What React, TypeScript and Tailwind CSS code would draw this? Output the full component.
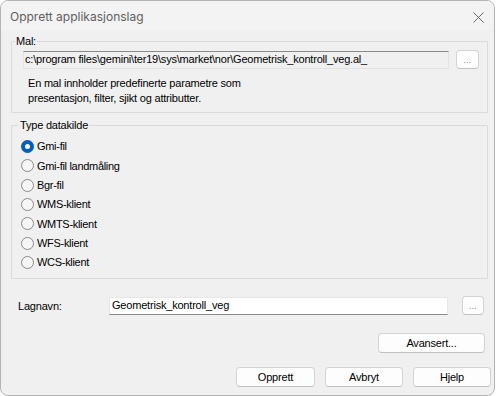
import React from "react";

const radios = [
  "Gmi-fil",
  "Gmi-fil landmåling",
  "Bgr-fil",
  "WMS-klient",
  "WMTS-klient",
  "WFS-klient",
  "WCS-klient",
];

function Btn({ className, children }: { className: string; children: React.ReactNode }) {
  return (
    <div
      className={
        "flex items-center justify-center rounded-[4px] border border-[#d3d3d3] border-b-[#c0c0c0] bg-[#fdfdfd] text-black " +
        className
      }
    >
      {children}
    </div>
  );
}

function Dots() {
  return <span className="text-[8px] leading-none text-[#555] tracking-[0.5px] mt-[3px]">...</span>;
}

export default function App() {
  return (
    <div className="w-[496px] h-[396px] bg-white">
      <div
        className="w-[495px] h-[396px] rounded-[8px] border border-[#b4b4b4] bg-[#f0f0f0] overflow-hidden flex flex-col text-[11px] tracking-[-0.2px] text-black"
        style={{ fontFamily: '"Liberation Sans", Arial, sans-serif' }}
      >
        {/* Title bar */}
        <div className="h-[29px] shrink-0 flex items-center justify-between pl-[9px] pr-[10px] bg-[#f3f3f3]">
          <span
            className="text-[12px] text-[#5f5f5f] mt-[3px] tracking-normal"
            style={{ fontFamily: 'Inter, "Noto Sans", sans-serif' }}
          >
            Opprett applikasjonslag
          </span>
          <svg width="11" height="11" viewBox="0 0 11 11" className="mt-[4px]">
            <path d="M0.5 0.5 L10.5 10.5 M10.5 0.5 L0.5 10.5" stroke="#6a6a6a" strokeWidth="1" fill="none" />
          </svg>
        </div>

        {/* Mal group */}
        <fieldset className="ml-[10px] mt-[5px] w-[477px] border border-[#dadada] rounded-[1px]">
          <legend className="ml-[3px] px-[1px] leading-[13px]">Mal:</legend>
          <div className="pl-[11px] pt-[2px] pb-[6px]">
            <div className="flex items-center gap-[7px]">
              <div className="w-[426px] h-[18px] border border-[#e3e3e3] border-t-[#8a8a8a] bg-[#f0f0f0] flex items-center pl-[1px] leading-none">
                c:\program files\gemini\ter19\sys\market\nor\Geometrisk_kontroll_veg.al_
              </div>
              <Btn className="w-[23px] h-[19px]">
                <Dots />
              </Btn>
            </div>
            <div className="pl-[5px] mt-[7px] leading-[15px]">
              <div>En mal innholder predefinerte parametre som</div>
              <div>presentasjon, filter, sjikt og attributter.</div>
            </div>
          </div>
        </fieldset>

        {/* Type datakilde group */}
        <fieldset className="ml-[10px] mt-[6px] w-[477px] border border-[#dadada] rounded-[1px]">
          <legend className="ml-[6px] px-[2px] leading-[13px]">Type datakilde</legend>
          <div className="pl-[9px] pt-[5px] pb-[6px] flex flex-col tracking-[-0.3px]">
            {radios.map((r, i) => (
              <div key={r} className="h-[19.33px] flex items-center gap-[2px]">
                {i === 0 ? (
                  <div className="w-[13px] h-[13px] rounded-full bg-[#005fb8] flex items-center justify-center">
                    <div className="w-[5px] h-[5px] rounded-full bg-white" />
                  </div>
                ) : (
                  <div className="w-[13px] h-[13px] rounded-full border border-[#8a8a8a] bg-[#f6f6f6]" />
                )}
                <span className="ml-[1px]">{r}</span>
              </div>
            ))}
          </div>
        </fieldset>

        {/* Lagnavn */}
        <div className="flex items-center mt-[17px] pl-[17px] h-[19px]">
          <span className="w-[91px]">Lagnavn:</span>
          <div className="w-[339px] h-[18px] bg-white border border-[#e6e6e6] border-b-[#8a8a8a] flex items-center pl-[2px] leading-none">
            Geometrisk_kontroll_veg
          </div>
          <Btn className="ml-[14px] w-[22px] h-[19px]">
            <Dots />
          </Btn>
        </div>

        {/* Avansert */}
        <div className="flex justify-end pr-[9px] mt-[18px]">
          <Btn className="w-[107px] h-[20px]">Avansert...</Btn>
        </div>

        {/* Bottom buttons */}
        <div className="flex justify-end gap-[10px] pr-[3px] mt-[14px]">
          <Btn className="w-[79px] h-[20px]">Opprett</Btn>
          <Btn className="w-[78px] h-[20px]">Avbryt</Btn>
          <Btn className="w-[78px] h-[20px]">Hjelp</Btn>
        </div>
      </div>
    </div>
  );
}
